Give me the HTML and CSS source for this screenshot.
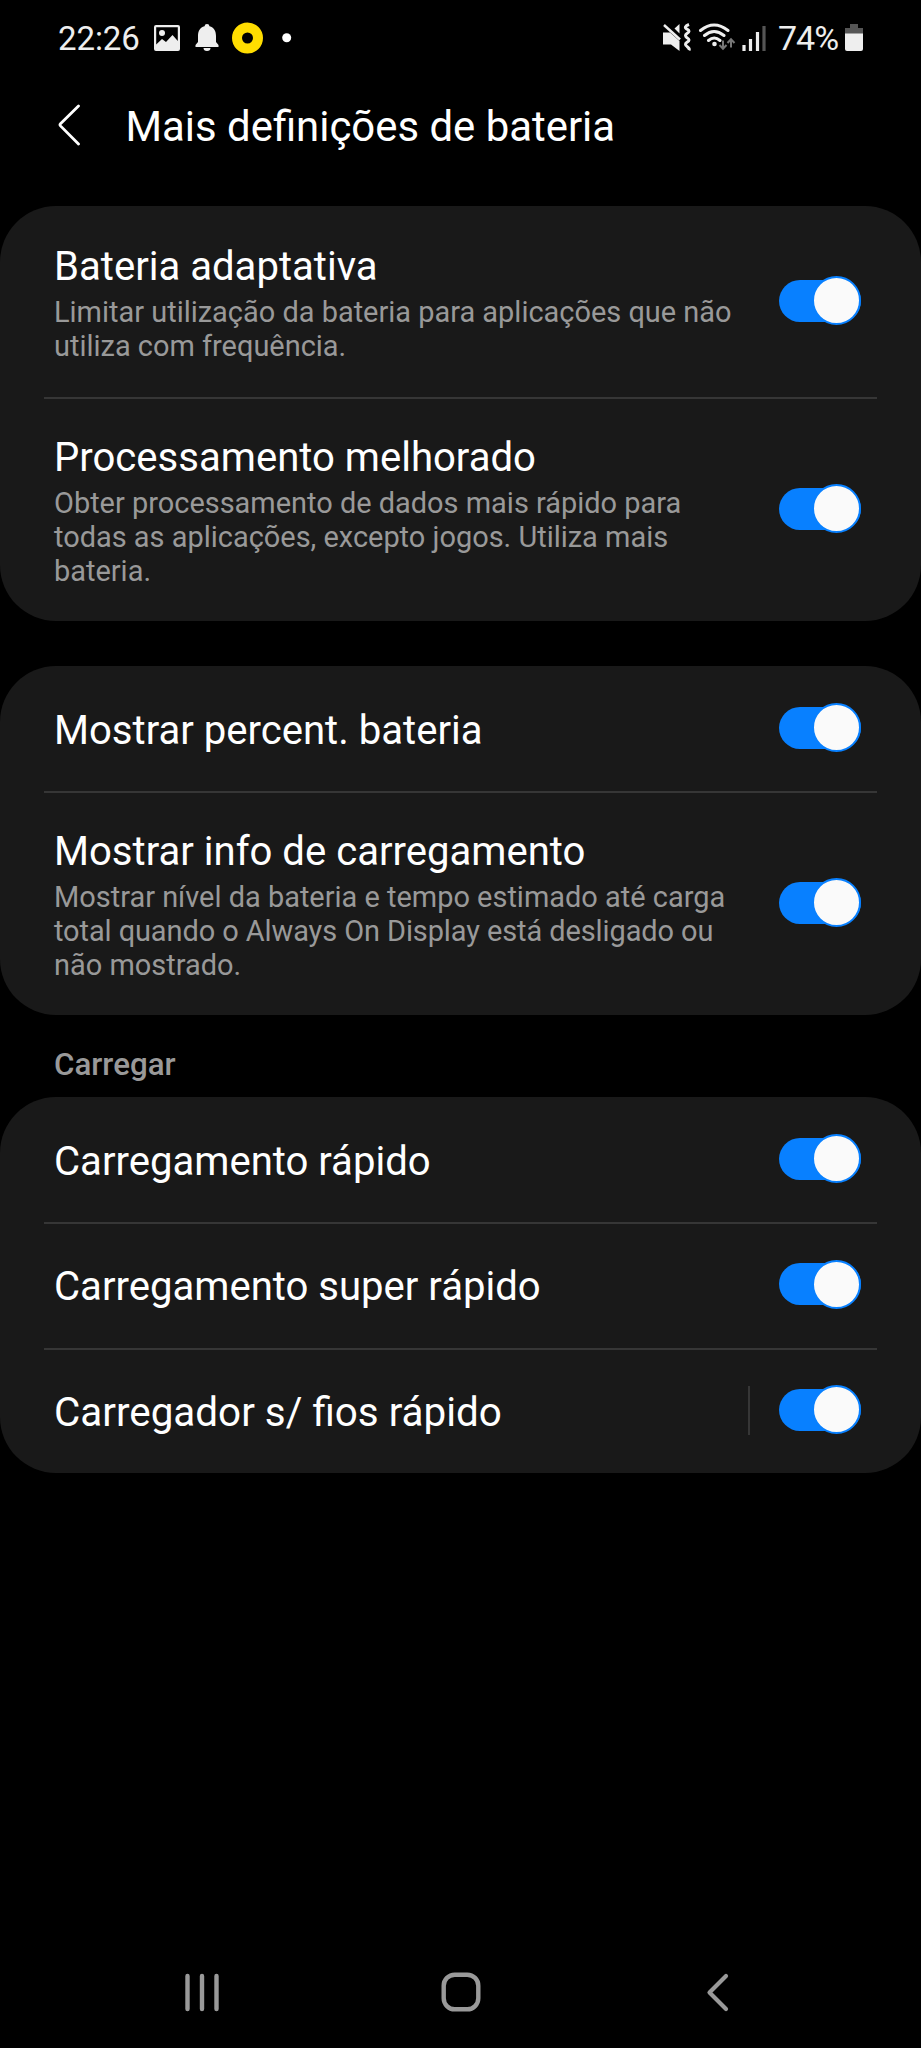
FILE: index.html
```html
<!DOCTYPE html>
<html lang="pt">
<head>
<meta charset="utf-8">
<title>Mais definições de bateria</title>
<link rel="stylesheet" href="styles.css">
</head>
<body>
<div class="screen">
  <div class="status">
    <span class="clock">22:26</span>
    <svg class="status-left" width="150" height="40" viewBox="0 0 150 40">
      <path fill="#eee" fill-rule="evenodd" d="M4 5h22a2 2 0 0 1 2 2v22a2 2 0 0 1-2 2H4a2 2 0 0 1-2-2V7a2 2 0 0 1 2-2zM4.200 7.200V24.500L10 19l4 3 6.500-7 5.300 6V7.200z"/>
      <circle cx="10" cy="13" r="3" fill="#eee"/>
      <path fill="#eee" d="M55 4a2.500 2.500 0 0 1 2.500 2.300C62 7.500 64 11 64 16v6l2.500 3v2h-23v-2l2.500-3v-6c0-5 2-8.500 6.500-9.700A2.500 2.500 0 0 1 55 4zM51.500 28h7a3.500 3 0 0 1-7 0z"/>
      <circle cx="95.500" cy="18" r="10.500" fill="none" stroke="#fd0" stroke-width="10"/>
      <circle cx="134.700" cy="17.800" r="4.500" fill="#fff"/>
    </svg>
    <svg class="status-right" width="106" height="40" viewBox="0 0 106 40">
      <path fill="#eee" d="M1 12.500h7L17.500 21v10L9 24.500H1z"/>
      <path d="M2 5 18 19.500" stroke="#eee" stroke-width="2.500"/>
      <path fill="#eee" d="M12.500 8.500 17.500 4v9.500z"/>
      <path d="M27 4.500q-6 2.200-2 4.700 4 2 0 4.300-3 2 0 4.200 4 2.300 0 4.500-3 2 0 4.200 3 2 2 4" fill="none" stroke="#eee" stroke-width="3"/>
      <g fill="none" stroke="#eee" stroke-width="3" stroke-linecap="round">
        <path d="M38.500 10.500q13.500-11 27.500 0M42.500 15.500q9.500-8 19.500 0M46.500 20.500q5.700-5 11.500 0"/>
      </g>
      <circle cx="52.500" cy="24" r="2.300" fill="#eee"/>
      <path d="M61 20.500v8M57.500 25l3.500 3.800 3.500-3.800M69 27.500v-8M65.500 23l3.500-3.800 3.500 3.800" fill="none" stroke="#777" stroke-width="2"/>
      <path d="M82 25v6M88.500 19v12M95.500 12v19" stroke="#eee" stroke-width="3.200"/>
      <path d="M102 6v25" stroke="#555" stroke-width="3.200"/>
    </svg>
    <span class="percent">74%</span>
    <svg class="battery" width="18" height="28" viewBox="0 0 18 28">
      <path fill="#555" d="M5 0h8v4h5v6H0V4h5z"/><path fill="#eee" d="M0 9.500h18V25a2 2 0 0 1-2 2H2a2 2 0 0 1-2-2z"/>
    </svg>
  </div>
  <div class="header">
    <svg class="back" width="24" height="44" viewBox="0 0 24 44"><path d="M20.500 3 2.500 20.700q-1 1.100 0 2.200L20.500 41" fill="none" stroke="#fff" stroke-width="2.800" stroke-linecap="round"/></svg>
    <h1 class="title">Mais definições de bateria</h1>
  </div>
  <div class="card">
    <div class="row">
      <div class="text"><div class="name">Bateria adaptativa</div><div class="desc">Limitar utilização da bateria para aplicações que não<br>utiliza com frequência.</div></div>
      <div class="toggle"><div class="thumb"></div></div>
    </div>
    <div class="row">
      <div class="text"><div class="name">Processamento melhorado</div><div class="desc">Obter processamento de dados mais rápido para<br>todas as aplicações, excepto jogos. Utiliza mais<br>bateria.</div></div>
      <div class="toggle"><div class="thumb"></div></div>
    </div>
  </div>
  <div class="card card-display">
    <div class="row">
      <div class="text"><div class="name">Mostrar percent. bateria</div></div>
      <div class="toggle"><div class="thumb"></div></div>
    </div>
    <div class="row">
      <div class="text"><div class="name">Mostrar info de carregamento</div><div class="desc">Mostrar nível da bateria e tempo estimado até carga<br><span class="tight">total quando o Always On Display está desligado ou</span><br>não mostrado.</div></div>
      <div class="toggle"><div class="thumb"></div></div>
    </div>
  </div>
  <div class="section">Carregar</div>
  <div class="card">
    <div class="row">
      <div class="text"><div class="name">Carregamento rápido</div></div>
      <div class="toggle"><div class="thumb"></div></div>
    </div>
    <div class="row">
      <div class="text"><div class="name">Carregamento super rápido</div></div>
      <div class="toggle"><div class="thumb"></div></div>
    </div>
    <div class="row">
      <div class="text"><div class="name wide">Carregador s/ fios rápido</div></div>
      <div class="split"></div>
      <div class="toggle"><div class="thumb"></div></div>
    </div>
  </div>
  <div class="nav">
    <svg width="36" height="40" viewBox="0 0 36 40"><path d="M3.500 4v33M18 4v33M32.500 4v33" stroke="#999" stroke-width="4.400" stroke-linecap="round"/></svg>
    <svg class="home" width="40" height="40" viewBox="0 0 40 40"><rect x="2.700" y="2.700" width="34.600" height="34.600" rx="11" fill="none" stroke="#999" stroke-width="4.400"/></svg>
    <svg width="24" height="40" viewBox="0 0 24 40"><path d="M20 4 3.500 20.500 20 37" fill="none" stroke="#999" stroke-width="4.200" stroke-linecap="round" stroke-linejoin="round"/></svg>
  </div>
</div>
</body>
</html>
```
FILE: styles.css
```css
* { box-sizing: border-box; }
body { margin: 0; background: #000; color: #fff; font-family: Roboto, "Liberation Sans", sans-serif; }
svg { display: block; flex: none; }
.screen { width: 921px; height: 2048px; display: flex; flex-direction: column; }
.status { height: 76px; padding: 0 58px; display: flex; align-items: center; color: #eee; }
.clock { width: 94px; font-size: 33px; letter-spacing: -0.1px; white-space: nowrap; }
.percent { width: 67px; font-size: 34px; letter-spacing: -1px; white-space: nowrap; }
.status-left { margin-top: 3px; }
.status-right { margin: 3px 10px 0 auto; }
.status-right + .percent { margin-left: 0; }
.battery { margin-top: -1px; }
.header { height: 130px; padding: 0 0 0 56px; display: flex; }
.back { margin: 27px 43.500px 0 2px; }
.title { margin: 26px 0 0; font-size: 41.900px; font-weight: 400; line-height: 50px; white-space: nowrap; }
.card { background: #191919; border-radius: 56px; padding: 0 44px; }
.card-display { margin-top: 45px; }
.row { padding: 37px 16px 34px 10px; display: flex; align-items: center; }
.row + .row { border-top: 2px solid #363636; padding-top: 35px; padding-bottom: 33px; }
.text { flex: 1; }
.name { font-size: 40.100px; line-height: 47px; white-space: nowrap; }
.wide { font-size: 40.400px; }
.row .name:only-child { margin: 4px 0 3px; }
.row + .row .name:only-child { margin-bottom: 4.500px; }
.desc { margin-top: 5px; font-size: 28.950px; line-height: 34px; color: #999; white-space: nowrap; }
.tight { letter-spacing: -0.080px; }
.toggle { flex: none; width: 82px; height: 42px; margin-top: -5px; border-radius: 21px; background: #0880ff; display: flex; align-items: center; justify-content: flex-end; }
.thumb { flex: none; width: 49px; height: 49px; border-radius: 50%; border: 2px solid #0880ff; background: #fafafa; }
.split { width: 2px; height: 49px; margin: -4px 29px 0 0; background: #363636; }
.section { height: 82px; padding: 32px 0 0 54px; font-size: 31.300px; line-height: 36px; font-weight: 500; color: #999; }
.nav { margin-top: auto; height: 112px; padding: 0 0 0 184px; display: flex; align-items: center; }
.home { margin: 0 225.500px 0 220.500px; }
```
